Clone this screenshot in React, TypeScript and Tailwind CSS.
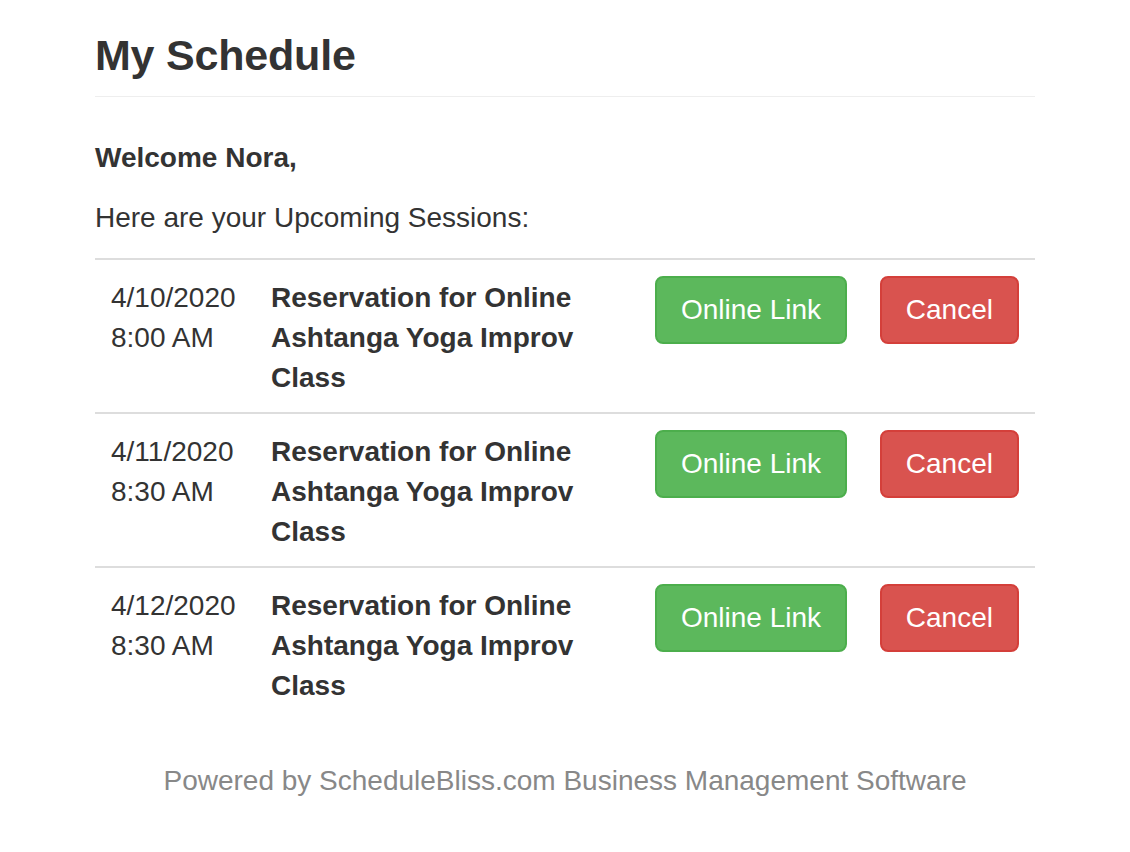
import React from 'react';

type Session = { date: string; time: string; title: string };

const sessions: Session[] = [
  { date: '4/10/2020', time: '8:00 AM', title: 'Reservation for Online Ashtanga Yoga Improv Class' },
  { date: '4/11/2020', time: '8:30 AM', title: 'Reservation for Online Ashtanga Yoga Improv Class' },
  { date: '4/12/2020', time: '8:30 AM', title: 'Reservation for Online Ashtanga Yoga Improv Class' },
];

const App = () => {
  return (
    <div className="min-h-screen bg-white text-[#333] font-['Liberation_Sans',Arial,sans-serif]">
      <div className="w-[940px] mx-auto">
        <header className="pt-[31px] pb-[17px] mb-[41px] border-b border-[#eee]">
          <h1 className="text-[43px] leading-[48px] font-bold tracking-[-0.2px]">My Schedule</h1>
        </header>

        <p className="text-[28px] leading-[40px] font-bold mb-[20px]">Welcome Nora,</p>
        <p className="text-[28px] leading-[40px] mb-[20px]">Here are your Upcoming Sessions:</p>

        <div className="mb-[40px]">
          {sessions.map((s, i) => (
            <div key={i} className="grid grid-cols-[160px_384px_224px_172px] border-t-2 border-[#ddd] text-[28px] leading-[40px]">
              <div className="pt-[18px] pb-[14px] px-[16px] whitespace-nowrap">
                <div>{s.date}</div>
                <div>{s.time}</div>
              </div>
              <div className="pt-[18px] pb-[14px] pl-[16px] pr-[50px] font-bold">{s.title}</div>
              <div className="p-[16px]">
                <button className="whitespace-nowrap px-[24px] py-[12px] border-2 border-[#4cae4c] bg-[#5cb85c] text-white rounded-[8px]">
                  Online Link
                </button>
              </div>
              <div className="p-[16px] flex justify-end items-start">
                <button className="whitespace-nowrap px-[24px] py-[12px] border-2 border-[#d43f3a] bg-[#d9534f] text-white rounded-[8px]">
                  Cancel
                </button>
              </div>
            </div>
          ))}
        </div>

        <p className="text-center text-[28px] leading-[40px] text-[#888] pt-[1px]">
          Powered by ScheduleBliss.com Business Management Software
        </p>
      </div>
    </div>
  );
};

export default App;
